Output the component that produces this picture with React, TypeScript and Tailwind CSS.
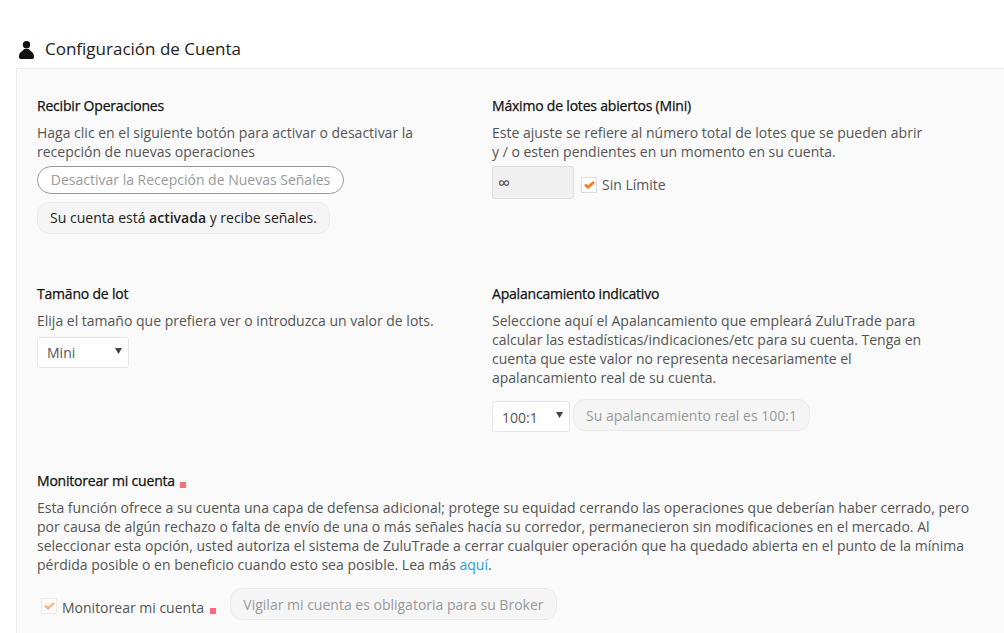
import { ReactNode } from "react";

function Heading({ children }: { children: ReactNode }) {
  return <h3 className="text-[14px] leading-[19px] font-normal tracking-[-0.2px] text-[#111] [-webkit-text-stroke:0.25px_#111]">{children}</h3>;
}

function Desc({ children, className = "" }: { children: ReactNode; className?: string }) {
  return <p className={"mt-[8px] text-[14px] leading-[19px] text-[#555] " + className}>{children}</p>;
}

function RedDot({ className = "" }: { className?: string }) {
  return <span className={"inline-block w-[6px] h-[6px] bg-[#ff6b78] [-webkit-text-stroke:0] " + className} />;
}

function Check({ faded = false }: { faded?: boolean }) {
  return (
    <span className={"flex items-center justify-center w-[16px] h-[16px] bg-white border border-[#ddd] " + (faded ? "opacity-50" : "")}>
      <svg width="11" height="8" viewBox="0 0 11 8" fill="none">
        <path d="M1 3.5 L4 6.3 L10 1" stroke="#f9781c" strokeWidth="2.6" />
      </svg>
    </span>
  );
}

function FakeSelect({ value, width, textClass = "" }: { value: string; width: string; textClass?: string }) {
  return (
    <div className={"flex items-center justify-between h-[31px] bg-white border border-[#e6e6e6] rounded-[3px] pl-[9px] pr-[6px] text-[14px] text-[#555] " + width}>
      <span className={textClass}>{value}</span>
      <svg width="7" height="6" viewBox="0 0 7 6" className="mb-[3px]">
        <path d="M0 0 H7 L3.5 6 Z" fill="#444" />
      </svg>
    </div>
  );
}

export default function App() {
  return (
    <div className="w-[1004px] h-[633px] overflow-hidden bg-white font-['Open_Sans',sans-serif]">
      <div className="flex items-center h-[68px] pt-[30px] pl-[19px]">
        <svg width="15" height="18" viewBox="0 0 15 18" fill="#111" className="mt-[2px]">
          <ellipse cx="7.5" cy="3.7" rx="3.7" ry="3.7" />
          <path d="M5 8 H10 C10.5 10 15 10.5 15 15.5 V16 C15 17.5 14 18 13 18 H2 C1 18 0 17.5 0 16 V15.5 C0 10.5 4.5 10 5 8 Z" />
        </svg>
        <h2 className="ml-[11px] text-[17px] leading-[24px] text-[#222]">Configuración de Cuenta</h2>
      </div>

      <div className="ml-[16px] h-[565px] bg-[#fafafa] border-l border-t border-[#eeeeee] pl-[20px] pt-[27px]">
        <div className="grid grid-cols-[455px_440px] grid-rows-[188px_187px_auto]">
          <section>
            <Heading>Recibir Operaciones</Heading>
            <Desc className="w-[420px]">Haga clic en el siguiente botón para activar o desactivar la recepción de nuevas operaciones</Desc>
            <div className="mt-[5px] flex items-center justify-center w-[307px] h-[28px] pb-[2px] bg-white border border-[#999] rounded-full text-[14px] text-[#999]">
              Desactivar la Recepción de Nuevas Señales
            </div>
            <div className="mt-[8px] flex items-center justify-center w-[293px] h-[32px] pb-[2px] bg-[#f5f5f5] border border-[#eaeaea] rounded-[12px] text-[14px] text-[#222]">
              <span>Su cuenta está <b className="font-semibold">activada</b> y recibe señales.</span>
            </div>
          </section>

          <section>
            <Heading>Máximo de lotes abiertos (Mini)</Heading>
            <Desc className="w-[440px]">Este ajuste se refiere al número total de lotes que se pueden abrir y / o esten pendientes en un momento en su cuenta.</Desc>
            <div className="mt-[5px] flex items-center">
              <div className="flex items-center w-[82px] h-[33px] pl-[5px] bg-[#f0f0f0] border border-[#ddd] rounded-[3px] text-[17px] text-[#444]">∞</div>
              <span className="ml-[7px] mt-[4px]"><Check /></span>
              <span className="ml-[5px] mt-[4px] text-[14px] text-[#555]">Sin Límite</span>
            </div>
          </section>

          <section>
            <Heading>Tamãno de lot</Heading>
            <Desc>Elija el tamaño que prefiera ver o introduzca un valor de lots.</Desc>
            <div className="mt-[7px]"><FakeSelect value="Mini" width="w-[92px]" /></div>
          </section>

          <section>
            <Heading>Apalancamiento indicativo</Heading>
            <Desc className="w-[440px]">Seleccione aquí el Apalancamiento que empleará ZuluTrade para calcular las estadísticas/indicaciones/etc para su cuenta. Tenga en cuenta que este valor no representa necesariamente el apalancamiento real de su cuenta.</Desc>
            <div className="mt-[12px] flex items-start">
              <div className="mt-[2px]"><FakeSelect value="100:1" width="w-[78px]" textClass="mt-[1px]" /></div>
              <div className="ml-[3px] flex items-center justify-center w-[237px] h-[32px] bg-[#f5f5f5] border border-[#eaeaea] rounded-[12px] text-[14px] text-[#999]">
                Su apalancamiento real es 100:1
              </div>
            </div>
          </section>

          <section className="col-span-2 w-[940px]">
            <Heading>Monitorear mi cuenta<RedDot className="ml-[5px] align-[-2px]" /></Heading>
            <Desc>
              Esta función ofrece a su cuenta una capa de defensa adicional; protege su equidad cerrando las operaciones que deberían haber cerrado, pero por causa de algún rechazo o falta de envío de una o más señales hacía su corredor, permanecieron sin modificaciones en el mercado. Al seleccionar esta opción, usted autoriza el sistema de ZuluTrade a cerrar cualquier operación que ha quedado abierta en el punto de la mínima pérdida posible o en beneficio cuando esto sea posible. Lea más <span className="text-[#2a9fd8]">aquí</span>.
            </Desc>
            <div className="mt-[14px] flex items-center pl-[4px]">
              <span className="mt-[3px]"><Check faded /></span>
              <span className="ml-[5px] mt-[7px] text-[14px] text-[#555]">Monitorear mi cuenta<RedDot className="ml-[6px] align-[-1px]" /></span>
              <div className="ml-[14px] flex items-center justify-center w-[327px] h-[32px] bg-[#f5f5f5] border border-[#eaeaea] rounded-[12px] text-[14px] text-[#999]">
                Vigilar mi cuenta es obligatoria para su Broker
              </div>
            </div>
          </section>
        </div>
      </div>
    </div>
  );
}
